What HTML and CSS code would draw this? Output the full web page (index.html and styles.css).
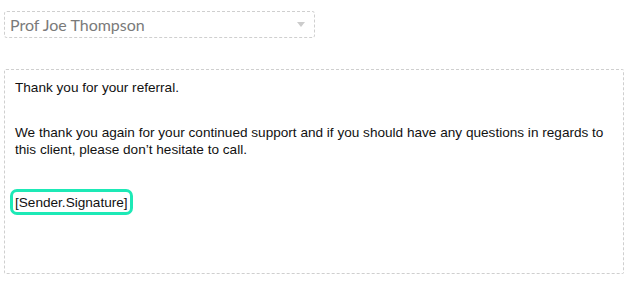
FILE: index.html
```html
<!DOCTYPE html>
<html lang="en">

<head>
  <meta charset="UTF-8">
  <title>Letter Editor</title>
  <link rel="stylesheet" href="styles.css">
</head>

<body>

  <!-- Recipient selector -->
  <div class="select-box">
    <span class="select-value">Prof Joe Thompson</span>
    <span class="select-arrow"></span>
  </div>

  <!-- Letter body -->
  <div class="editor">
    <p>Thank you for your referral.</p>
    <p><br></p>
    <p>We thank you again for your continued support and if you should have any questions in regards to this client, please don’t hesitate to call.</p>
    <p><br></p>
    <p class="signature"><span class="merge-field">[Sender.Signature]</span></p>
  </div>

</body>

</html>
```

FILE: styles.css
```css
/* Global */
body {
  margin: 0;
  padding: 11px 4px;
  background-color: #ffffff;
  font-family: "Liberation Sans", Arial, sans-serif;
}

/* Recipient select */
.select-box {
  width: 311px;
  height: 27px;
  box-sizing: border-box;
  display: flex;
  align-items: center;
  justify-content: space-between;
  padding: 0 9px 0 5px;
  border: 1px dashed #cfcfcf;
  border-radius: 3px;
  font-family: Lato, sans-serif;
  font-size: 16px;
  color: #7a7a7a;
}

.select-arrow {
  width: 0;
  height: 0;
  border-left: 4.5px solid transparent;
  border-right: 4.5px solid transparent;
  border-top: 5px solid #cccccc;
}

/* Editor */
.editor {
  width: 620px;
  height: 205px;
  box-sizing: border-box;
  margin-top: 31px;
  padding: 9px 10px;
  border: 1px dashed #cfcfcf;
  border-radius: 2px;
  font-size: 13.6px;
  line-height: 17px;
  color: #111111;
}

.editor p {
  margin: 0 0 5.5px;
}

.editor .signature {
  padding-top: 3px;
}

/* Merge field highlight */
.merge-field {
  display: inline-block;
  margin-left: -5px;
  padding: 2px 2px 1px;
  border: 3px solid #1de9b6;
  border-radius: 7px;
}
```
